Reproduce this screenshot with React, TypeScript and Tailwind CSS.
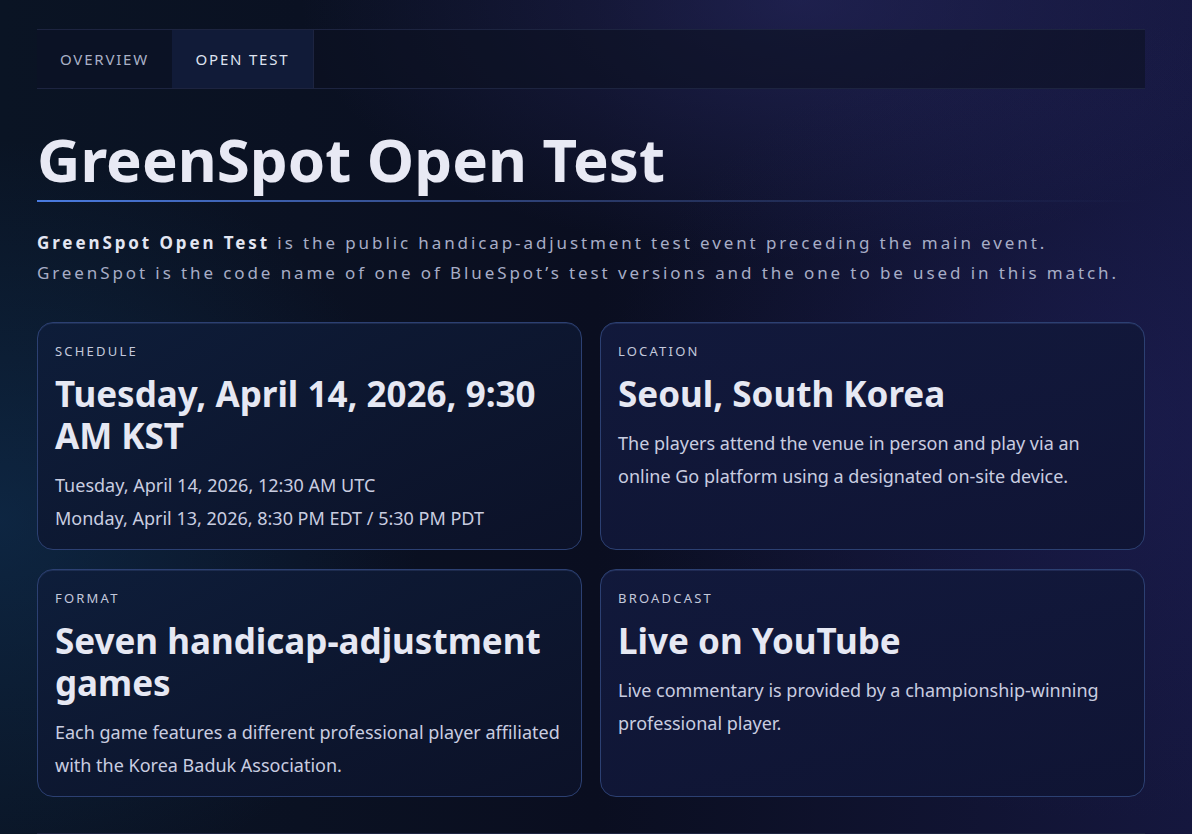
const cards = [
  {
    label: "SCHEDULE",
    title: "Tuesday, April 14, 2026, 9:30 AM KST",
    lines: [
      "Tuesday, April 14, 2026, 12:30 AM UTC",
      "Monday, April 13, 2026, 8:30 PM EDT / 5:30 PM PDT",
    ],
    tone: "left",
  },
  {
    label: "LOCATION",
    title: "Seoul, South Korea",
    lines: [
      "The players attend the venue in person and play via an online Go platform using a designated on-site device.",
    ],
    tone: "right",
  },
  {
    label: "FORMAT",
    title: "Seven handicap-adjustment games",
    lines: [
      "Each game features a different professional player affiliated with the Korea Baduk Association.",
    ],
    tone: "left",
  },
  {
    label: "BROADCAST",
    title: "Live on YouTube",
    lines: [
      "Live commentary is provided by a championship-winning professional player.",
    ],
    tone: "right",
  },
];

function InfoCard({ label, title, lines, tone }: (typeof cards)[number]) {
  return (
    <div
      className={
        "rounded-[16px] border border-[#2c4072] px-[17px] pt-[20px] pb-[14px] shadow-[inset_0_1px_0_rgba(120,150,230,0.15)] " +
        (tone === "left"
          ? "bg-gradient-to-br from-[#0e1d3a]/90 to-[#0c1229]/90"
          : "bg-gradient-to-br from-[#121a3e]/90 to-[#0f1433]/90")
      }
    >
      <div className="text-[13px] leading-[16px] tracking-[2.2px] text-[#c4c9dc]">{label}</div>
      <h2 className="mt-[14px] text-[35px] font-bold leading-[42px] text-[#e6e8f3]">{title}</h2>
      <div className="mt-[12px]">
        {lines.map((l) => (
          <p key={l} className="text-[18px] leading-[33px] text-[#c9cde0]">
            {l}
          </p>
        ))}
      </div>
    </div>
  );
}

export default function App() {
  return (
    <div
      className="relative min-h-[834px] w-full overflow-hidden bg-[#0a0f20]"
      style={{ fontFamily: '"Noto Sans", "Noto Sans CJK KR", sans-serif' }}
    >
      <div className="pointer-events-none absolute inset-0 bg-gradient-to-r from-[#0a1424] via-[#0a0e20] to-[#15173e]" />
      <div className="pointer-events-none absolute inset-0 bg-[radial-gradient(ellipse_500px_260px_at_800px_0px,rgba(50,50,120,0.45),transparent)]" />
      <div className="pointer-events-none absolute inset-0 bg-[radial-gradient(ellipse_420px_380px_at_0px_520px,rgba(20,70,120,0.35),transparent)]" />
      <div className="pointer-events-none absolute inset-0 bg-[radial-gradient(ellipse_500px_400px_at_1100px_420px,rgba(35,35,100,0.35),transparent)]" />

      <div className="relative ml-[37px] w-[1108px] pt-[29px]">
        <nav className="flex h-[60px] border-y border-[#1d2440] bg-[#0b1022]/60">
          <div className="flex w-[135px] items-center justify-center bg-[#0c1226]/70 text-[15px] tracking-[1.8px] text-[#a9b0c6]">
            OVERVIEW
          </div>
          <div className="flex w-[142px] items-center justify-center border-r border-[#1d2440] bg-[#111b38] text-[15px] tracking-[1.8px] text-[#dfe3f0]">
            OPEN TEST
          </div>
        </nav>

        <h1 className="mt-[32px] text-[60px] font-bold leading-[76px] text-[#e8e9f4]">
          GreenSpot Open Test
        </h1>
        <div className="mt-[3px] h-[2px] w-full bg-gradient-to-r from-[#4a7be0] via-[#2a3a6a] to-transparent" />

        <p className="mt-[26px] text-[17px] leading-[30px] tracking-[2.9px] text-[#a7adc6]">
          <b className="font-bold text-[#e3e6f2]">GreenSpot Open Test</b> is the public
          handicap-adjustment test event preceding the main event.
          <br />
          GreenSpot is the code name of one of BlueSpot’s test versions and the one to be used in
          this match.
        </p>

        <div className="mt-[34px] grid grid-cols-2 gap-x-[18px] gap-y-[19px]">
          {cards.map((c) => (
            <InfoCard key={c.label} {...c} />
          ))}
        </div>
      </div>
      <div className="relative mt-[36px] ml-[37px] h-px w-[1108px] bg-[#1d2440]" />
    </div>
  );
}
